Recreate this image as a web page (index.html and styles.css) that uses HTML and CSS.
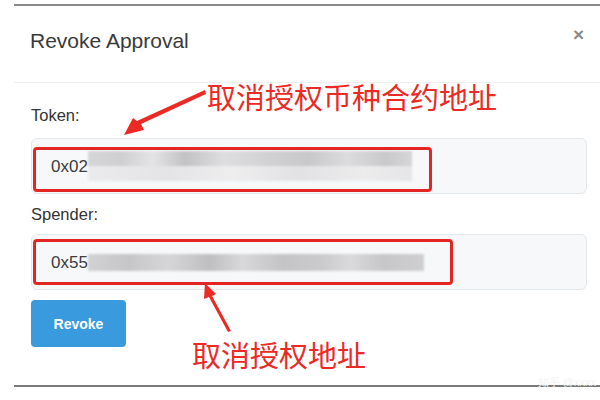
FILE: index.html
```html
<!DOCTYPE html>
<html>
<head>
    <title>Revoke Approval</title>
    <meta charset="UTF-8">
    <link rel="stylesheet" href="styles.css">
</head>
<body>
    <div class="modal">
        <div class="modal-header">
            <h4>Revoke Approval</h4>
            <span class="close">&times;</span>
        </div>

        <div class="modal-body">
            <label class="field-label">Token:</label>
            <div class="field">
                <span class="addr">0x02</span>
                <span class="mask mask-token"></span>
                <div class="mark mark-token"></div>
            </div>

            <label class="field-label label-spender">Spender:</label>
            <div class="field">
                <span class="addr">0x55</span>
                <span class="mask mask-spender"></span>
                <div class="mark mark-spender"></div>
            </div>

            <button class="btn-revoke">Revoke</button>
        </div>
    </div>

    <!-- annotations drawn over the screenshot -->
    <div class="note note-token">取消授权币种合约地址</div>
    <div class="note note-spender">取消授权地址</div>

    <svg class="arrows" width="600" height="400" viewBox="0 0 600 400">
        <polygon points="205,90 206,94 141,124 144,130 124,135 133,118 137,121" fill="#ec2a25"/>
        <polygon points="231,331 228,332 209,297 204,299 205,283 216,294 212,296" fill="#ec2a25"/>
    </svg>

    <div class="watermark">知乎 @xxxx</div>
</body>
</html>
```

FILE: styles.css
```css
* {
    margin: 0;
    padding: 0;
    box-sizing: border-box;
}

body {
    font-family: 'Liberation Sans', Arial, sans-serif;
    background: white;
    width: 600px;
    height: 400px;
    overflow: hidden;
    position: relative;
    color: #333;
}

.modal {
    margin: 4px 0 0 14px;
    border-top: 2px solid #8c8c8c;
    border-bottom: 2px solid #7a7a7a;
    height: 383px;
    display: flex;
    flex-direction: column;
}

.modal-header {
    height: 77px;
    border-bottom: 1px solid #eeeeee;
    display: flex;
    align-items: center;
    justify-content: space-between;
    padding: 0 16px 6px 16px;
}

.modal-header h4 {
    font-size: 21px;
    font-weight: normal;
    color: #3a3a3a;
}

.close {
    font-size: 19px;
    font-weight: bold;
    color: #8a8a8a;
    margin-right: 0;
    margin-top: -12px;
}

.modal-body {
    padding: 23px 13px 0 17px;
    display: flex;
    flex-direction: column;
    align-items: flex-start;
}

.field-label {
    font-size: 16.5px;
    color: #333;
    line-height: 18px;
    margin-bottom: 14px;
}

.label-spender {
    margin-bottom: 11px;
}

.field {
    position: relative;
    width: 556px;
    height: 56px;
    background: #f7f8fa;
    border: 1px solid #e4e7eb;
    border-radius: 6px;
    display: flex;
    align-items: center;
    padding-left: 19px;
    margin-bottom: 11px;
}

.addr {
    font-size: 17px;
    color: #3d3d3d;
    margin-top: 1px;
}

.mask {
    display: block;
    height: 30px;
    filter: blur(1.2px);
}

.mask-token {
    width: 324px;
    background:
        linear-gradient(to right, #d6d6d8 0%, #cfcfd1 10%, #e4e4e6 20%, #c2c2c4 30%, #dedee0 42%, #d2d2d4 55%, #c8c8ca 68%, #dcdcde 80%, #c9c9cb 92%, #d6d6d8 100%) top / 100% 50% no-repeat,
        linear-gradient(to right, #ebebed 0%, #e4e4e6 25%, #eeeeef 45%, #e2e2e4 65%, #ececed 85%, #e6e6e8 100%) bottom / 100% 50% no-repeat;
}

.mask-spender {
    width: 336px;
    height: 17px;
    background: linear-gradient(to right, #d2d2d4 0%, #c6c6c8 12%, #d6d6d8 24%, #bfbfc1 36%, #d8d8da 46%, #c4c4c6 58%, #cbcbcd 70%, #dadadc 78%, #c7c7c9 88%, #cfcfd1 100%);
}

.mark {
    position: absolute;
    left: 1px;
    border: 3px solid #e32624;
    border-radius: 4px;
}

.mark-token {
    top: 8px;
    width: 399px;
    height: 45px;
}

.mark-spender {
    top: 4px;
    width: 420px;
    height: 46px;
}

.btn-revoke {
    margin-top: -1px;
    width: 95px;
    height: 47px;
    background: #3a9ade;
    border: none;
    border-radius: 4px;
    color: white;
    font-family: inherit;
    font-size: 14px;
    font-weight: bold;
}

.note {
    position: absolute;
    color: #ec2a25;
    font-family: 'Noto Sans CJK SC', sans-serif;
    font-size: 29px;
    line-height: 34px;
    white-space: nowrap;
}

.note-token {
    left: 207px;
    top: 79px;
}

.note-spender {
    left: 192px;
    top: 337px;
}

.arrows {
    position: absolute;
    left: 0;
    top: 0;
}

.watermark {
    position: absolute;
    right: 4px;
    bottom: 10px;
    font-size: 11px;
    color: #f4f4f4;
}
```
